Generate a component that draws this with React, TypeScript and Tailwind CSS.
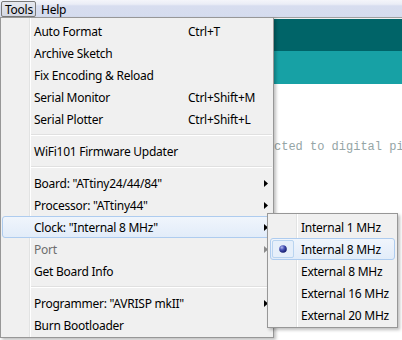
import React from "react";

type Item =
  | { type: "item"; label: string; shortcut?: string; arrow?: boolean; disabled?: boolean; hover?: boolean }
  | { type: "sep" };

const items: Item[] = [
  { type: "item", label: "Auto Format", shortcut: "Ctrl+T" },
  { type: "item", label: "Archive Sketch" },
  { type: "item", label: "Fix Encoding & Reload" },
  { type: "item", label: "Serial Monitor", shortcut: "Ctrl+Shift+M" },
  { type: "item", label: "Serial Plotter", shortcut: "Ctrl+Shift+L" },
  { type: "sep" },
  { type: "item", label: "WiFi101 Firmware Updater" },
  { type: "sep" },
  { type: "item", label: 'Board: "ATtiny24/44/84"', arrow: true },
  { type: "item", label: 'Processor: "ATtiny44"', arrow: true },
  { type: "item", label: 'Clock: "Internal 8 MHz"', arrow: true, hover: true },
  { type: "item", label: "Port", arrow: true, disabled: true },
  { type: "item", label: "Get Board Info" },
  { type: "sep" },
  { type: "item", label: 'Programmer: "AVRISP mkII"', arrow: true },
  { type: "item", label: "Burn Bootloader" },
];

const sub = ["Internal 1 MHz", "Internal 8 MHz", "External 8 MHz", "External 16 MHz", "External 20 MHz"];

function Arrow({ gray }: { gray?: boolean }) {
  return (
    <svg width="4" height="7" viewBox="0 0 4 7" className="shrink-0">
      <path d="M0 0 L4 3.5 L0 7 Z" fill={gray ? "#8a8a8a" : "#000"} />
    </svg>
  );
}

function RadioDot() {
  return (
    <svg width="8" height="8" viewBox="0 0 8 8">
      <defs>
        <radialGradient id="rd" cx="35%" cy="30%" r="70%">
          <stop offset="0%" stopColor="#b4bcf0" />
          <stop offset="45%" stopColor="#4a55b8" />
          <stop offset="100%" stopColor="#141c6e" />
        </radialGradient>
      </defs>
      <circle cx="4" cy="4" r="3.8" fill="url(#rd)" />
    </svg>
  );
}

export default function App() {
  return (
    <div className="relative w-[402px] h-[340px] overflow-hidden bg-white font-['Noto_Sans',sans-serif] text-[12px] leading-none text-black tracking-[-0.25px]">
      {/* menubar */}
      <div className="h-[17px] flex items-center bg-[linear-gradient(to_bottom,#f4f5fa_0%,#eaedf6_25%,#d7ddef_35%,#d5dcee_100%)]">
        <div className="ml-[1px] h-[16px] w-[35px] mt-[1px] flex items-center pl-[3px] pt-[1px] rounded-[2px] border border-[#7a7a7a] bg-[linear-gradient(to_bottom,#e6e8ef,#d3d7e2)]">
          Tools
        </div>
        <div className="ml-[5px] pt-[2px]">Help</div>
      </div>
      <div className="h-[1px] bg-[#a0a0a0]" />
      <div className="h-[1px] bg-[#f0f0f0]" />
      {/* editor header bars */}
      <div className="h-[32px] bg-[#006468]" />
      <div className="h-[33px] bg-[#17a1a5]" />
      <div className="pt-[57px] pl-[238px] font-['Liberation_Mono',monospace] tracking-normal text-[12px] text-[#95a5a6] whitespace-nowrap">
        connected to digital pin
      </div>

      {/* Tools dropdown */}
      <div className="absolute left-0 top-[17px] w-[274px] h-[321px] border border-[#979797] bg-[#f0f0f0] px-[1px] pt-[2px] pb-[1px] shadow-[2px_2px_3px_rgba(0,0,0,0.25)] bg-[linear-gradient(to_right,transparent_28px,#e2e3e3_28px,#e2e3e3_29px,#ffffff_29px,#ffffff_30px,transparent_30px)]">
        {items.map((it, i) =>
          it.type === "sep" ? (
            <div key={i} className="h-[10px] flex items-center pl-[29px]">
              <div className="w-full h-[2px] border-t border-[#e0e0e0] border-b border-b-white" />
            </div>
          ) : (
            <div
              key={i}
              className={
                "h-[22px] flex items-center pl-[31px] pr-[3px] pt-[2px] rounded-[3px] border " +
                (it.hover
                  ? "border-[#aeccef] bg-[linear-gradient(to_bottom,#f0f5fc,#e2ecf9)]"
                  : "border-transparent") +
                (it.disabled ? " text-[#6d6d6d]" : "")
              }
            >
              <div className="w-[154px] whitespace-nowrap">{it.label}</div>
              <div className="whitespace-nowrap">{it.shortcut}</div>
              <div className="ml-auto -mt-[2px] flex">{it.arrow && <Arrow gray={it.disabled} />}</div>
            </div>
          )
        )}
      </div>

      {/* Clock submenu */}
      <div className="absolute left-[267px] top-[213px] w-[131px] h-[115px] border border-[#979797] bg-[#f0f0f0] px-[2px] pt-[2px] pb-[1px] shadow-[2px_2px_3px_rgba(0,0,0,0.25)] bg-[linear-gradient(to_right,transparent_28px,#e2e3e3_28px,#e2e3e3_29px,#ffffff_29px,#ffffff_30px,transparent_30px)]">
        {sub.map((s, i) => (
          <div
            key={i}
            className={
              "relative h-[22px] flex items-center pl-[30px] pt-[2px] rounded-[3px] border " +
              (i === 1
                ? "border-[#aeccef] bg-[linear-gradient(to_bottom,#f0f5fc,#e2ecf9)]"
                : "border-transparent")
            }
          >
            {i === 1 && (
              <div className="absolute left-[1px] top-[1px] w-[22px] h-[18px] rounded-[2px] border border-[#b9d4f0] bg-[#e6effa]" />
            )}
            {i === 1 && (
              <div className="absolute left-[8px] top-[6px] flex">
                <RadioDot />
              </div>
            )}
            <span className="relative whitespace-nowrap">{s}</span>
          </div>
        ))}
      </div>
    </div>
  );
}
